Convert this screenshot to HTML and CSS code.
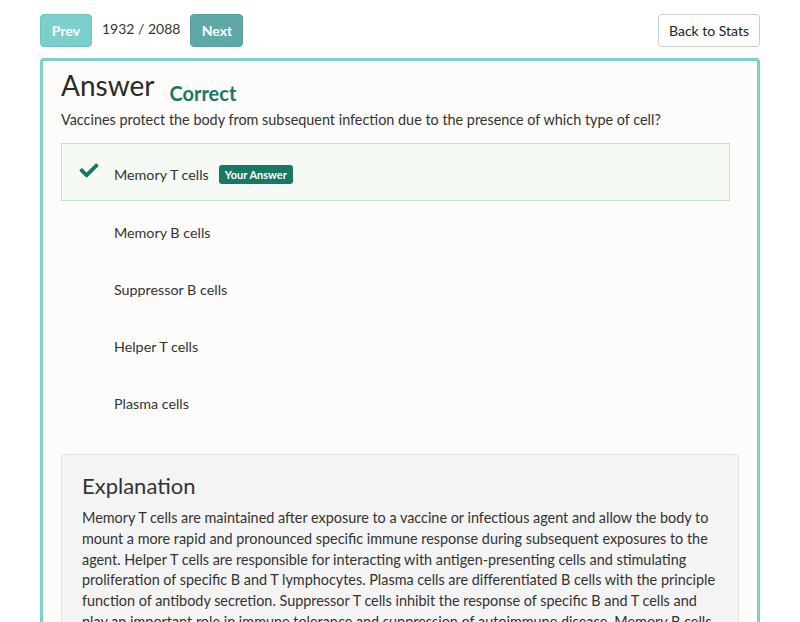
FILE: index.html
```html
<!DOCTYPE html>
<html>
<head>
<meta charset="utf-8">
<link rel="stylesheet" href="styles.css">
</head>
<body>
<div class="topbar">
  <div class="nav">
    <button class="btn btn-prev">Prev</button>
    <span class="counter">1932 / 2088</span>
    <button class="btn btn-next">Next</button>
  </div>
  <button class="btn btn-back">Back to Stats</button>
</div>
<div class="panel">
  <div class="title-row">
    <h1 class="title">Answer</h1>
    <span class="status">Correct</span>
  </div>
  <p class="question">Vaccines protect the body from subsequent infection due to the presence of which type of cell?</p>
  <ul class="options">
    <li class="option selected">
      <svg class="check" viewBox="0 0 512 512"><path d="M173.898 439.404l-166.4-166.4c-9.997-9.997-9.997-26.206 0-36.204l36.203-36.204c9.997-9.998 26.207-9.998 36.204 0L192 312.69 432.095 72.596c9.997-9.997 26.207-9.997 36.204 0l36.203 36.204c9.997 9.997 9.997 26.206 0 36.204l-294.4 294.401c-9.998 9.997-26.207 9.997-36.204-.001z"/></svg>
      <span class="opt-text">Memory T cells</span>
      <span class="badge">Your Answer</span>
    </li>
    <li class="option">
      <svg class="check faint" viewBox="0 0 512 512"><path d="M173.898 439.404l-166.4-166.4c-9.997-9.997-9.997-26.206 0-36.204l36.203-36.204c9.997-9.998 26.207-9.998 36.204 0L192 312.69 432.095 72.596c9.997-9.997 26.207-9.997 36.204 0l36.203 36.204c9.997 9.997 9.997 26.206 0 36.204l-294.4 294.401c-9.998 9.997-26.207 9.997-36.204-.001z"/></svg>
      <span class="opt-text">Memory B cells</span>
    </li>
    <li class="option">
      <svg class="check faint" viewBox="0 0 512 512"><path d="M173.898 439.404l-166.4-166.4c-9.997-9.997-9.997-26.206 0-36.204l36.203-36.204c9.997-9.998 26.207-9.998 36.204 0L192 312.69 432.095 72.596c9.997-9.997 26.207-9.997 36.204 0l36.203 36.204c9.997 9.997 9.997 26.206 0 36.204l-294.4 294.401c-9.998 9.997-26.207 9.997-36.204-.001z"/></svg>
      <span class="opt-text">Suppressor B cells</span>
    </li>
    <li class="option">
      <svg class="check faint" viewBox="0 0 512 512"><path d="M173.898 439.404l-166.4-166.4c-9.997-9.997-9.997-26.206 0-36.204l36.203-36.204c9.997-9.998 26.207-9.998 36.204 0L192 312.69 432.095 72.596c9.997-9.997 26.207-9.997 36.204 0l36.203 36.204c9.997 9.997 9.997 26.206 0 36.204l-294.4 294.401c-9.998 9.997-26.207 9.997-36.204-.001z"/></svg>
      <span class="opt-text">Helper T cells</span>
    </li>
    <li class="option">
      <svg class="check faint" viewBox="0 0 512 512"><path d="M173.898 439.404l-166.4-166.4c-9.997-9.997-9.997-26.206 0-36.204l36.203-36.204c9.997-9.998 26.207-9.998 36.204 0L192 312.69 432.095 72.596c9.997-9.997 26.207-9.997 36.204 0l36.203 36.204c9.997 9.997 9.997 26.206 0 36.204l-294.4 294.401c-9.998 9.997-26.207 9.997-36.204-.001z"/></svg>
      <span class="opt-text">Plasma cells</span>
    </li>
  </ul>
  <div class="explanation">
    <h2 class="exp-title">Explanation</h2>
    <p class="exp-text">Memory T cells are maintained after exposure to a vaccine or infectious agent and allow the body to mount a more rapid and pronounced specific immune response during subsequent exposures to the agent. Helper T cells are responsible for interacting with antigen-presenting cells and stimulating proliferation of specific B and T lymphocytes. Plasma cells are differentiated B cells with the principle function of antibody secretion. Suppressor T cells inhibit the response of specific B and T cells and play an important role in immune tolerance and suppression of autoimmune disease. Memory B cells are long-lived cells that respond rapidly upon re-exposure to an antigen.</p>
  </div>
</div>
</body>
</html>
```
FILE: styles.css
```css
* { box-sizing: border-box; }
html, body { margin: 0; padding: 0; background: #ffffff; }
body {
  font-family: Lato, "Open Sans", sans-serif;
  color: #333333;
  overflow: hidden;
  height: 622px;
}
.topbar {
  display: flex;
  justify-content: space-between;
  align-items: center;
  padding: 14px 40px 0 40px;
}
.nav { display: flex; align-items: center; }
.btn {
  font-family: Lato, sans-serif;
  height: 33px;
  border-radius: 4px;
  font-size: 14px;
  cursor: pointer;
  white-space: nowrap;
  margin: 0;
}
.btn-prev, .btn-next {
  color: #ffffff;
  font-weight: bold;
  border: 1px solid transparent;
  padding: 0 8px;
}
.btn-prev { background: #7ccfcc; border-color: #6fc4c1; width: 52px; }
.btn-next { background: #5ea9a7; border-color: #56a19f; width: 53px; }
.counter {
  font-size: 14px;
  color: #333;
  margin: 0 10px;
  white-space: nowrap;
  position: relative;
  top: -2px;
}
.btn-back {
  background: #ffffff;
  border: 1px solid #cccccc;
  color: #222;
  padding: 0 8px;
  width: 102px;
}
.panel {
  margin: 11px 40px 0 40px;
  border: 3px solid #7ccfcc;
  border-radius: 4px;
  background: #fdfcfa;
  padding: 4px 18px 0 18px;
  height: 600px;
}
.title-row { display: flex; align-items: baseline; }
.title {
  font-size: 28px;
  font-weight: normal;
  margin: 0;
  line-height: 40px;
  color: #2a2a2a;
}
.status {
  font-size: 20px;
  font-weight: bold;
  color: #187864;
  margin-left: 15px;
  position: relative;
  top: 5px;
}
.question {
  font-size: 14.4px;
  margin: 5px 0 13px 0;
  line-height: 20px;
}
.options {
  list-style: none;
  margin: 0 9px 0 0;
  padding: 0;
}
.option {
  display: flex;
  align-items: center;
  height: 58px;
  margin-bottom: -1px;
  padding: 4px 0 0 16px;
  border: 1px solid transparent;
  font-size: 14.3px;
}
.option.selected {
  background: #f5faf4;
  border-color: #c6e3c1;
  margin-bottom: 0;
}
.check {
  width: 22px;
  height: 19px;
  fill: #187864;
  margin-right: 14px;
  flex: none;
  position: relative;
  top: -4px;
}
.check.faint { fill: #fbfbf9; }
.opt-text { color: #333; }
.badge {
  background: #187864;
  color: #ffffff;
  font-weight: bold;
  font-size: 11px;
  border-radius: 3px;
  padding: 3px 6px;
  margin-left: 10px;
  line-height: 13px;
}
.explanation {
  margin-top: 25px;
  background: #f4f4f4;
  border: 1px solid #e3e3e3;
  border-radius: 4px;
  padding: 17px 16px 17px 20px;
}
.exp-title {
  font-size: 22px;
  font-weight: normal;
  margin: 0 0 8px 0;
  line-height: 28px;
  color: #333;
}
.exp-text {
  font-size: 14.4px;
  line-height: 20.75px;
  margin: 0;
  color: #333;
}
```
